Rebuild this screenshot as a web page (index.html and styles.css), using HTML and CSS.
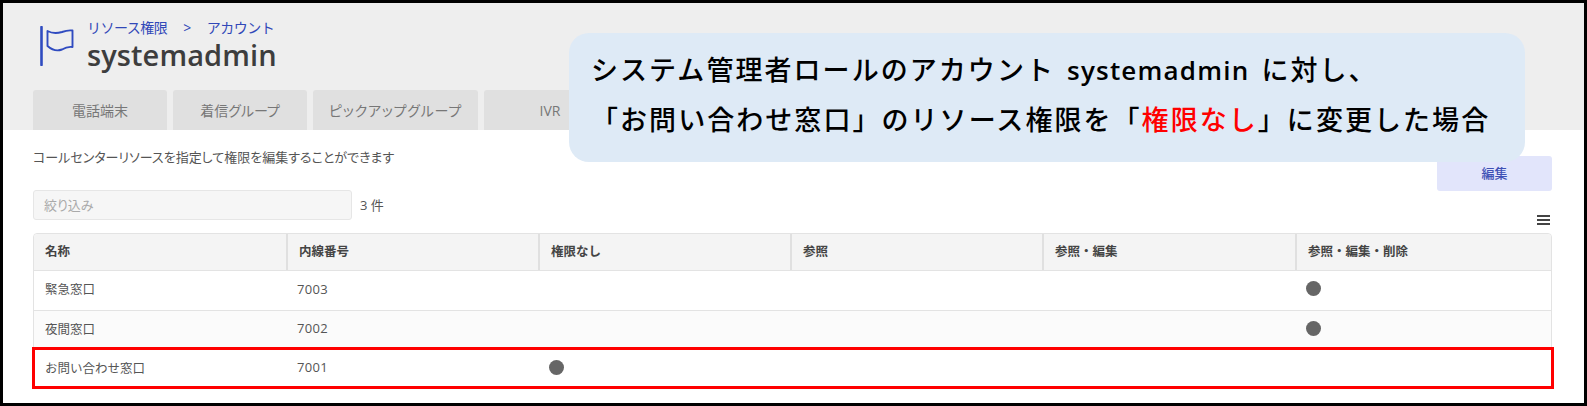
FILE: index.html
```html
<!DOCTYPE html>
<html lang="ja">

<head>
    <meta charset="utf-8">
    <title>systemadmin</title>
    <link rel="stylesheet" href="styles.css">
</head>

<body>
    <div class="frame">
        <div class="header">
            <div class="heading">
                <svg class="flag" width="36" height="40" viewBox="0 0 36 40" fill="none" stroke="#2f4bc0">
                    <path d="M2.5 1V39" stroke-width="2.6" stroke-linecap="round" />
                    <path d="M8.5 5C13 7.5 18 7.5 23 6C27 4.5 30 4 33.5 4.5V21C30 20.5 27 21 23 23.5C18 25.5 13 24 8.5 20V5Z" stroke-width="1.9" stroke-linejoin="round" />
                </svg>
                <div>
                    <div class="breadcrumb">
                        <span>リソース権限</span>
                        <span class="crumb-sep">&gt;</span>
                        <span>アカウント</span>
                    </div>
                    <div class="title">systemadmin</div>
                </div>
            </div>
            <div class="tab">
                <button class="tablinks tab-a">電話端末</button>
                <button class="tablinks tab-a">着信グループ</button>
                <button class="tablinks tab-b">ピックアップグループ</button>
                <button class="tablinks tab-c">IVR</button>
            </div>
        </div>

        <div class="tabcontent">
            <div class="desc-row">
                <div class="desc">コールセンターリソースを指定して権限を編集することができます</div>
                <button class="edit-btn">編集</button>
            </div>

            <div class="filter-row">
                <div class="filter">絞り込み</div>
                <div class="count">3 件</div>
                <div class="menu-icon"><span></span><span></span><span></span></div>
            </div>

            <div class="table">
                <div class="row head">
                    <div>名称</div>
                    <div>内線番号</div>
                    <div>権限なし</div>
                    <div>参照</div>
                    <div>参照・編集</div>
                    <div>参照・編集・削除</div>
                </div>
                <div class="row">
                    <div>緊急窓口</div>
                    <div class="num">7003</div>
                    <div></div>
                    <div></div>
                    <div></div>
                    <div><span class="dot"></span></div>
                </div>
                <div class="row even">
                    <div>夜間窓口</div>
                    <div class="num">7002</div>
                    <div></div>
                    <div></div>
                    <div></div>
                    <div><span class="dot"></span></div>
                </div>
                <div class="row marked">
                    <div>お問い合わせ窓口</div>
                    <div class="num">7001</div>
                    <div><span class="dot"></span></div>
                    <div></div>
                    <div></div>
                    <div></div>
                </div>
            </div>
        </div>

        <!-- annotation over the page -->
        <div class="callout">
            <div>システム管理者ロールのアカウント <span class="latin">systemadmin</span> に対し、</div>
            <div>「お問い合わせ窓口」のリソース権限を「<span class="red">権限なし</span>」に変更した場合</div>
        </div>
    </div>
</body>

</html>
```

FILE: styles.css
```css
* {
    box-sizing: border-box;
}

body {
    margin: 0;
    background-color: white;
    font-family: "Open Sans", "Noto Sans CJK JP", sans-serif;
    color: #555;
}

.frame {
    position: relative;
    height: 406px;
    border: 3px solid black;
    overflow: hidden;
    background-color: white;
}

.header {
    height: 127px;
    padding: 14px 30px 0;
    display: flex;
    flex-direction: column;
    background-color: #eeeeee;
}

.heading {
    height: 73px;
    display: flex;
    gap: 12px;
}

.flag {
    margin: 9px 0 0 6px;
    flex: none;
}

.breadcrumb {
    display: flex;
    height: 20px;
    align-items: center;
    font-size: 14px;
    letter-spacing: -0.5px;
    color: #3148b8;
}

.crumb-sep {
    margin: 0 16px 0 16px;
}

.title {
    height: 36px;
    line-height: 36px;
    font-size: 29px;
    font-weight: 600;
    letter-spacing: 0.1px;
    color: #3d3d3d;
}

.tab {
    display: flex;
    gap: 6px;
}

.tablinks {
    height: 40px;
    padding: 0;
    border: none;
    border-radius: 3px 3px 0 0;
    background-color: #e0e0e0;
    font-family: inherit;
    font-size: 14px;
    font-feature-settings: "palt";
    color: #777;
}

.tab-a {
    width: 134px;
}

.tab-b {
    width: 165px;
    letter-spacing: 0.8px;
}

.tab-c {
    width: 132px;
}

.tabcontent {
    padding: 0 32px 0 30px;
}

.desc-row {
    height: 60px;
    display: flex;
    justify-content: space-between;
}

.desc {
    margin-top: 17px;
    font-size: 13px;
    line-height: 20px;
    font-feature-settings: "palt";
    color: #555;
}

.edit-btn {
    width: 115px;
    height: 35px;
    margin-top: 26px;
    padding: 0 0 3px;
    border: none;
    border-radius: 3px;
    background-color: #e2e5fb;
    font-family: inherit;
    font-size: 13px;
    font-weight: 500;
    color: #3f51b5;
}

.filter-row {
    height: 43px;
    display: flex;
    align-items: flex-start;
    gap: 8px;
}

.filter {
    width: 319px;
    height: 30px;
    padding-left: 10px;
    line-height: 28px;
    border: 1px solid #e6e6e6;
    border-radius: 3px;
    background-color: #f6f6f6;
    font-size: 13px;
    font-feature-settings: "palt";
    color: #aaa;
}

.count {
    font-size: 13px;
    line-height: 30px;
    color: #555;
}

.menu-icon {
    width: 13px;
    margin: 25px 2px 0 auto;
    display: flex;
    flex-direction: column;
    gap: 2px;
}

.menu-icon span {
    height: 2px;
    background-color: #444;
}

.table {
    border: 1px solid #e3e3e3;
    border-radius: 4px;
}

.row {
    position: relative;
    height: 39px;
    padding-bottom: 4px;
    display: grid;
    grid-template-columns: 252px 252px 252px 252px 253px 1fr;
    align-items: center;
    border-top: 1px solid #e3e3e3;
    font-size: 12.5px;
    color: #555;
}

.row > div {
    padding-left: 11px;
}

.row > .num {
    font-size: 13px;
    letter-spacing: 0.3px;
}

.row.head {
    height: 37px;
    padding-bottom: 0;
    border-top: none;
    align-items: stretch;
    border-radius: 4px 4px 0 0;
    background-color: #f4f4f4;
    border-bottom: 1px solid #e3e3e3;
    font-weight: 700;
    color: #444;
}

.row.head > div {
    line-height: 36px;
    border-left: 2px solid #e0e0e0;
}

.row.head > div:first-child {
    border-left: none;
}

.head + .row {
    border-top: none;
}

.row.even {
    background-color: #fbfbfb;
}

.row.marked::after {
    content: "";
    position: absolute;
    top: -3px;
    right: -3px;
    bottom: -1px;
    left: -2px;
    border: 3px solid #ff0000;
}

.dot {
    display: block;
    width: 15px;
    height: 15px;
    border-radius: 50%;
    background-color: #666;
}

.callout {
    position: absolute;
    top: 30px;
    left: 566px;
    width: 956px;
    height: 129px;
    padding: 12px 0 0 22px;
    border-radius: 20px;
    background-color: #deeaf6;
    font-size: 27px;
    font-weight: 500;
    line-height: 49px;
    letter-spacing: 2.05px;
    white-space: nowrap;
    color: black;
}

.latin {
    font-size: 26px;
    font-weight: 600;
    letter-spacing: 1.2px;
    margin: 0 3px;
}

.red {
    color: #ff0000;
}
```
